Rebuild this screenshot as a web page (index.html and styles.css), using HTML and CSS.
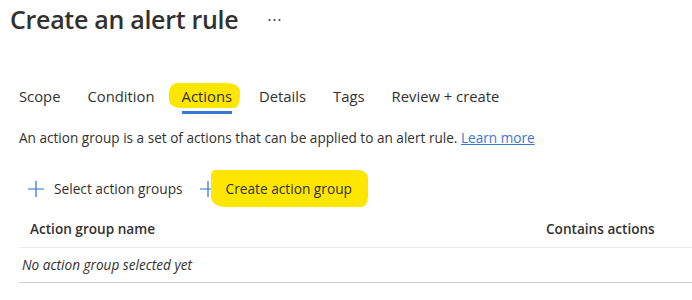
FILE: index.html
```html
<!DOCTYPE html>
<html lang="en">
<head>
    <meta charset="UTF-8">
    <title>Create an alert rule</title>
    <link rel="stylesheet" href="styles.css">
</head>
<body>
    <div class="title-row">
        <h1>Create an alert rule</h1>
        <svg class="more" width="13" height="4" viewBox="0 0 13 4"><circle cx="1.5" cy="2" r="1.1"/><circle cx="6.5" cy="2" r="1.1"/><circle cx="11.5" cy="2" r="1.1"/></svg>
    </div>

    <nav class="tabs">
        <span class="tab">Scope</span>
        <span class="tab">Condition</span>
        <span class="tab active"><span class="marker">Actions</span></span>
        <span class="tab">Details</span>
        <span class="tab">Tags</span>
        <span class="tab">Review + create</span>
    </nav>

    <p class="desc">An action group is a set of actions that can be applied to an alert rule. <a href="#">Learn more</a></p>

    <div class="toolbar">
        <button class="cmd">
            <svg width="16" height="16" viewBox="0 0 16 16"><path d="M8 0v16M0 8h16" stroke="#2a6fd1" stroke-width="1.2" fill="none"/></svg>
            Select action groups
        </button>
        <button class="cmd">
            <svg width="16" height="16" viewBox="0 0 16 16"><path d="M8 0v16M0 8h16" stroke="#2a6fd1" stroke-width="1.2" fill="none"/></svg>
            <span class="marker">Create action group</span>
        </button>
    </div>

    <table class="grid">
        <thead>
            <tr>
                <th class="col-name">Action group name</th>
                <th class="col-actions">Contains actions</th>
            </tr>
        </thead>
        <tbody>
            <tr>
                <td class="empty" colspan="2">No action group selected yet</td>
            </tr>
        </tbody>
    </table>
</body>
</html>
```

FILE: styles.css
```css
body {
    margin: 0;
    font-family: 'Open Sans', 'Noto Sans', sans-serif;
    color: #323130;
    background: #fff;
    overflow: hidden;
}

.title-row {
    display: flex;
    align-items: center;
    padding: 1px 0 0 10px;
    height: 36px;
}
.title-row h1 {
    margin: 0;
    font-size: 25px;
    font-weight: 600;
    letter-spacing: -0.3px;
}
.more {
    margin: 2px 0 0 30px;
    fill: #444;
}

.tabs {
    display: flex;
    gap: 27px;
    padding: 49px 0 0 19px;
    font-size: 14.8px;
}
.tab {
    position: relative;
    padding-bottom: 7px;
    line-height: 20px;
}
.tab.active::after {
    content: "";
    position: absolute;
    left: 0;
    right: 0;
    bottom: -1px;
    height: 3px;
    background: #3a77d0;
}

/* yellow marker pen strokes */
.marker {
    position: relative;
    z-index: 0;
}
.marker::before {
    content: "";
    position: absolute;
    z-index: -1;
    background: #ffe600;
}
.tab .marker::before {
    left: -13px;
    right: -8px;
    top: -3px;
    bottom: -2px;
    border-radius: 8px 14px 6px 12px / 10px 8px 12px 8px;
}
.cmd .marker::before {
    left: -15px;
    right: -16px;
    top: -9px;
    bottom: -9px;
    border-radius: 4px 10px 6px 14px / 6px 8px 10px 10px;
}

.desc {
    margin: 15px 0 0 19px;
    font-size: 13.6px;
}
.desc a {
    color: #3a77d0;
}

.toolbar {
    display: flex;
    gap: 17px;
    padding: 32px 0 0 28px;
}
.cmd {
    display: flex;
    align-items: center;
    gap: 10px;
    border: none;
    background: none;
    padding: 0;
    font-family: inherit;
    font-size: 13.7px;
    color: #323130;
}

.grid {
    margin: 11px 0 0 19px;
    width: calc(100% - 19px);
    border-collapse: collapse;
    font-size: 13.6px;
    line-height: 18px;
}
.grid th {
    text-align: left;
    font-weight: 600;
    padding: 11px 0 9px 11px;
    border-bottom: 1px solid #ebebeb;
}
.grid th.col-actions {
    width: 146px;
    padding-left: 0;
}
.grid td.empty {
    font-style: italic;
    padding: 8px 0 8px 3px;
    border-bottom: 1px solid #cfcfcf;
}
```
